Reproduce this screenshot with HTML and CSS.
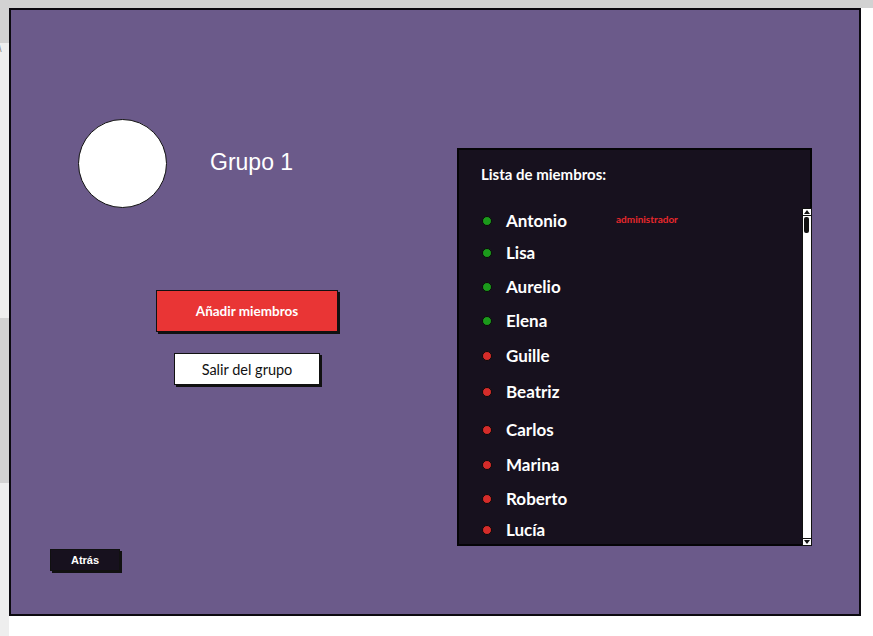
FILE: index.html
```html
<!DOCTYPE html>
<html lang="es">
<head>
<meta charset="utf-8">
<title>Grupo 1</title>
<link rel="stylesheet" href="styles.css">
</head>
<body>
<div class="screen">
  <div class="topbar"></div>
  <div class="main">
    <div class="gutter">
      <div class="g g1"></div>
      <div class="g g2"><span class="mark">\</span></div>
      <div class="g g3"></div>
      <div class="g g4"></div>
    </div>
    <div class="frame">
      <div class="left">
        <div class="header">
          <div class="avatar"></div>
          <h1 class="title">Grupo 1</h1>
        </div>
        <button class="btn btn-add">Añadir miembros</button>
        <button class="btn btn-leave">Salir del grupo</button>
        <button class="btn btn-back">Atrás</button>
      </div>
      <div class="panel">
        <div class="panel-head">Lista de miembros:</div>
        <div class="panel-body">
          <ul class="members">
            <li class="member"><span class="dot on"></span><span class="name">Antonio</span><span class="role">administrador</span></li>
            <li class="member"><span class="dot on"></span><span class="name">Lisa</span></li>
            <li class="member"><span class="dot on"></span><span class="name">Aurelio</span></li>
            <li class="member"><span class="dot on"></span><span class="name">Elena</span></li>
            <li class="member"><span class="dot off"></span><span class="name">Guille</span></li>
            <li class="member"><span class="dot off"></span><span class="name">Beatriz</span></li>
            <li class="member"><span class="dot off"></span><span class="name">Carlos</span></li>
            <li class="member"><span class="dot off"></span><span class="name">Marina</span></li>
            <li class="member"><span class="dot off"></span><span class="name">Roberto</span></li>
            <li class="member"><span class="dot off"></span><span class="name">Lucía</span></li>
          </ul>
          <div class="scrollbar">
            <div class="arrow up"></div>
            <div class="track"><div class="thumb"></div></div>
            <div class="arrow down"></div>
          </div>
        </div>
      </div>
    </div>
  </div>
</div>
</body>
</html>
```
FILE: styles.css
```css
* { box-sizing: border-box; }
html, body { margin: 0; padding: 0; background: #ffffff; }
body { width: 873px; height: 636px; overflow: hidden; font-family: "Liberation Sans", Arial, sans-serif; }

.topbar { height: 8px; background: #d2d2d2; }
.main { display: flex; align-items: flex-start; }

.gutter { width: 9px; height: 628px; display: flex; flex-direction: column; }
.g1 { height: 35px; background: #d2d2d2; }
.g2 { height: 275px; background: #eeeeee; position: relative; }
.g3 { height: 165px; background: #d2d2d2; }
.g4 { flex: 1; background: #eeeeee; }
.mark { position: absolute; left: -1px; top: 1px; font-size: 9px; color: #777; line-height: 10px; }

.frame {
  width: 852px; height: 608px;
  border: 2px solid #0c0a10;
  background: #6b5a8a;
  display: flex; align-items: flex-start;
}

.left { width: 446px; height: 604px; display: flex; flex-direction: column; align-items: flex-start; }
.header { display: flex; align-items: center; margin-top: 109px; margin-left: 67px; }
.avatar { width: 89px; height: 89px; border-radius: 50%; background: #fff; border: 1.5px solid #111; }
.title { margin: 0 0 4px 43px; font-weight: normal; font-size: 23px; color: #fff; line-height: 26px; }

.btn { border: 1px solid #111; box-shadow: 2px 2px 0 #111; padding: 0; font-family: "Lato", "Open Sans", sans-serif; cursor: pointer; }
.btn-add { margin: 82px 0 0 145px; width: 182px; height: 42px; background: #e93535; color: #fff; font-size: 13.5px; font-weight: bold; }
.btn-leave { margin: 21px 0 0 163px; width: 146px; height: 32px; background: #fff; color: #111; font-size: 14.5px; }
.btn-back { margin: 164px 0 0 39px; width: 70px; height: 22px; background: #17111e; color: #fff; font-family: "Liberation Sans", Arial, sans-serif; font-size: 11px; font-weight: bold; }

.panel {
  margin-top: 138px; width: 355px; height: 398px;
  border: 2px solid #050407; background: #17111e;
  display: flex; flex-direction: column;
  font-family: "Lato", "Open Sans", sans-serif; color: #fff;
}
.panel-head { padding: 14px 0 0 22px; height: 58px; font-size: 15px; font-weight: bold; line-height: 20px; }
.panel-body { flex: 1; display: flex; margin: 0 -2px -2px 0; }

.members { list-style: none; margin: -3px 0 0 0; padding: 0 0 0 23px; flex: 1; }
.member { display: flex; align-items: center; height: 30px; margin-top: 4px; }
.member:nth-child(1) { margin-top: 0; }
.member:nth-child(2) { margin-top: 2px; }
.member:nth-child(5) { margin-top: 5px; }
.member:nth-child(6) { margin-top: 6px; }
.member:nth-child(7) { margin-top: 8px; }
.member:nth-child(8) { margin-top: 5px; }
.member:nth-child(10) { margin-top: 1px; }

.dot { width: 10px; height: 10px; border-radius: 50%; border: 1px solid #0a0a0a; flex: none; margin-top: 1px; }
.dot.on { background: #1b9a1b; }
.dot.off { background: #d52c2a; }
.name { margin-left: 14px; width: 110px; font-size: 17px; font-weight: bold; }
.role { font-size: 10px; color: #e8282c; font-weight: bold; margin-bottom: 2px; }

.scrollbar { width: 10px; border: 1px solid #111; background: #fff; display: flex; flex-direction: column; }
.arrow { height: 7px; position: relative; border-bottom: 1px solid #111; }
.arrow.down { border-bottom: 0; border-top: 1px solid #111; }
.arrow::after { content: ""; position: absolute; left: 1px; width: 0; height: 0; border-left: 3px solid transparent; border-right: 3px solid transparent; }
.arrow.up::after { top: 1px; border-bottom: 4px solid #111; }
.arrow.down::after { top: 1px; border-top: 4px solid #111; }
.track { flex: 1; padding: 1px 0 0 1px; }
.thumb { width: 5px; height: 16px; background: #111; border-radius: 2px; }
```
